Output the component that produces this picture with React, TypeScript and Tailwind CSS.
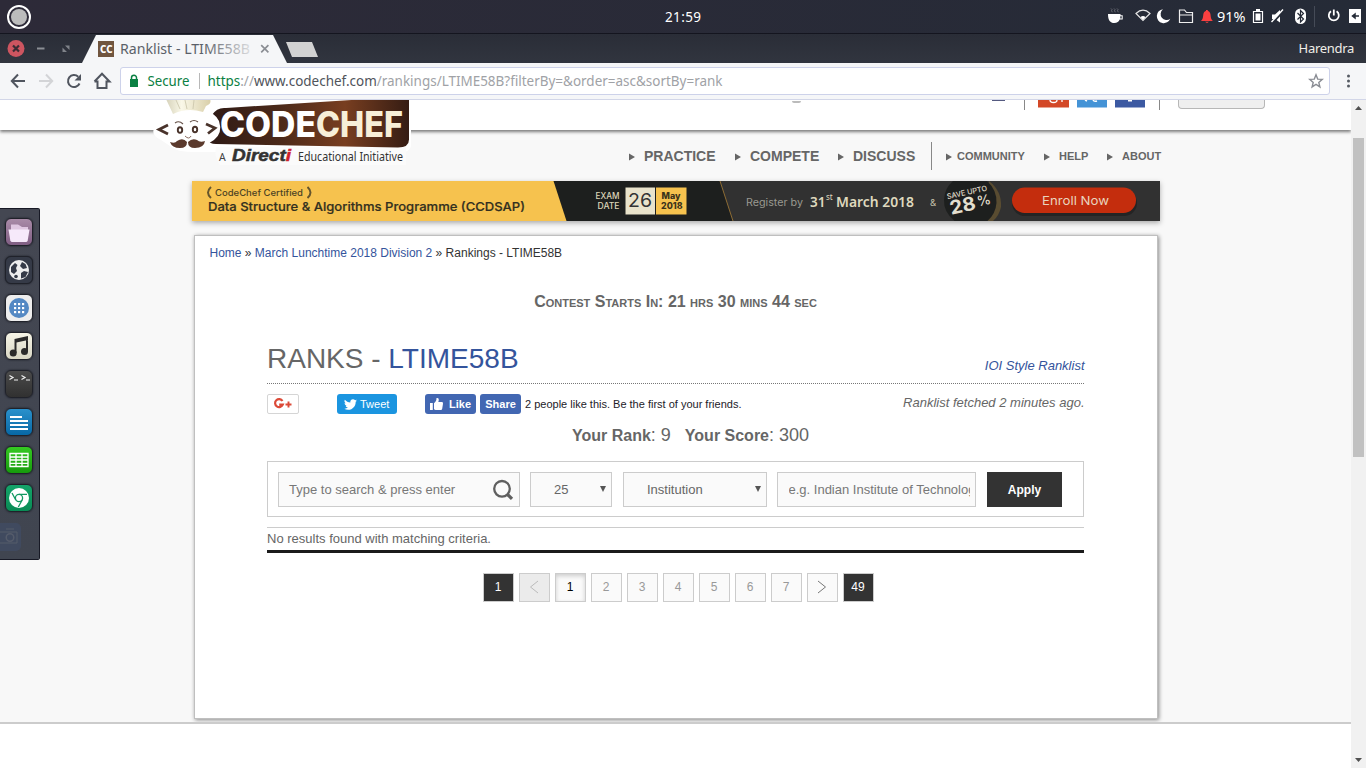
import React from "react";

const BODY = "font-['Liberation_Sans',Arial,sans-serif]";
const UI = "font-['Noto_Sans','Open_Sans',sans-serif]";

function TopBar() {
  return (
    <div className={`flex h-[34px] shrink-0 items-center border-b border-[#14151f] bg-linear-to-r from-[#2d2a38] to-[#252b37] text-white ${UI}`}>
      <div className="flex w-[610px] shrink-0 pl-[7px]">
        <div className="flex size-6 items-center justify-center rounded-full border-2 border-white">
          <div className="size-4 rounded-full bg-[#bcbcbc]" />
        </div>
      </div>
      <div className="w-[146px] shrink-0 text-center text-[13.5px] leading-[32px]">
        <svg width="60" height="20" className="mx-auto block">
          <text x="12" y="15" fontSize="13.5" fill="#fff" textLength="36">21:59</text>
        </svg>
      </div>
      <svg width="610" height="33" viewBox="756 0 610 33" className="block shrink-0" fill="none">
        <g fill="#fff">
          <path d="M1108 14h12.500v1.200h2.200v4.300h-3c-.8 2.200-2.600 3.500-5.400 3.500-4 0-6.300-2.500-6.300-9zM1120.300 16.200v2.200h1.400v-2.200z" fillRule="evenodd" />
          <path d="M1111 8.500l1 1-.5 1.200.8 1.500M1114 8.500l1 1-.5 1.200.8 1.500M1117 8.500l1 1-.5 1.200.8 1.500" stroke="#777a82" strokeWidth=".8" fill="none" />
        </g>
        <path d="M1136 13.500c4.500-4.200 9.500-4.200 14 0l-7 7z" stroke="#e6e6e6" strokeWidth="1.200" />
        <path d="M1140.500 17q2.500-2 5 0l-2.500 3z" fill="#fff" />
        <path d="M1163 9.200a7 7 0 1 0 7.300 9.600 6 6 0 0 1-7.300-9.600z" fill="#fff" />
        <path d="M1179.500 22.500v-12.500h5l2 2.500h6v10zM1179.500 15h13" stroke="#eee" strokeWidth="1.200" />
        <path d="M1201 21c2-2 2-4 2.300-6.500.3-2.200 1.500-3.300 2.700-3.500V10h1.800v1c1.200.2 2.400 1.300 2.700 3.500.3 2.500.3 4.500 2.300 6.500zM1205 21.800h4l-2 1.200z" fill="#fb4040" />
        <text x="1217" y="22" fontSize="14" fill="#fff" textLength="28.500" lengthAdjust="spacingAndGlyphs">91%</text>
        <path d="M1253.500 11.500h9v11h-9z" stroke="#fff" strokeWidth="1.200" />
        <path d="M1256 9h4v2h-4zM1255.500 13.500h5v7h-5z" fill="#fff" />
        <path d="M1272 14.500h3l5-4.500v12.500l-5-3.500h-3z" fill="#fff" />
        <path d="M1284 10.500l-12 13" stroke="#252b37" strokeWidth="2" />
        <path d="M1283 9.500l-11.500 12.500" stroke="#fff" strokeWidth="1.400" />
        <rect x="1295" y="8.500" width="11" height="15.500" rx="5.500" fill="#fff" />
        <path d="M1297.500 13l6 6-3 3V10.500l3 3-6 6" stroke="#252b37" strokeWidth="1.200" />
        <path d="M1314.500 6v21" stroke="#454b57" />
        <path d="M1331 11.300a5 5 0 1 0 5.600 0" stroke="#fff" strokeWidth="1.800" />
        <path d="M1333.800 9.500v6" stroke="#fff" strokeWidth="1.800" />
        <path d="M1349 9h12v14h-12z" fill="#fff" />
        <path d="M1359 16h-6M1355 14l-2.500 2 2.500 2z" stroke="#252b37" strokeWidth="1.500" fill="#252b37" />
      </svg>
    </div>
  );
}

function TabStrip() {
  return (
    <div className={`flex h-[29px] shrink-0 items-start bg-linear-to-b from-[#2a2d37] to-[#31353f] ${UI}`}>
      <svg width="82" height="29" className="block shrink-0" fill="none">
        <circle cx="16" cy="14.500" r="8.500" fill="#cd5560" />
        <path d="M13 11.500l6 6M19 11.500l-6 6" stroke="#3a2c34" strokeWidth="2.200" />
        <path d="M37 14.500h7.500" stroke="#8b8e94" strokeWidth="2" />
        <path d="M65 11.500h4.500v4.500zM62.500 13.500v4.500h4.500z" fill="#80838a" />
      </svg>
      <div className="mt-px flex h-7 w-[205px] shrink-0 items-center bg-[#f5f6f8] pl-4 [clip-path:polygon(0_100%,14px_0,191px_0,100%_100%)]">
        <div className="flex h-4 w-4 items-center justify-center bg-[#70553f]">
          <svg width="16" height="16"><text x="2" y="11.500" fontSize="10" fontWeight="800" fill="#fff" textLength="12.500" lengthAdjust="spacingAndGlyphs">CC</text></svg>
        </div>
        <svg width="131" height="22" className="ml-[6px] block shrink-0">
          <defs><linearGradient id="fade" gradientUnits="userSpaceOnUse" x1="85" x2="131" y1="0" y2="0"><stop offset="0" stopColor="#5a5f68" /><stop offset="1" stopColor="#5a5f68" stopOpacity=".15" /></linearGradient></defs>
          <text x="0" y="16" fontSize="15" fill="url(#fade)" textLength="130" lengthAdjust="spacingAndGlyphs">Ranklist - LTIME58B</text>
        </svg>
        <svg width="10" height="10" viewBox="0 0 10 10" className="ml-[9px] block shrink-0"><path d="M1.200 1.200l7.200 7.200M8.400 1.200L1.200 8.400" stroke="#8b8e94" strokeWidth="1.700" /></svg>
      </div>
      <div className="-ml-px mt-2 h-[15px] w-8 bg-[#d2d2d2] [clip-path:polygon(0_0,26px_0,100%_100%,6px_100%)]" />
      <div className="ml-auto pr-3 text-[13px] leading-[28px] tracking-[-0.3px] text-[#f0eee8]">Harendra</div>
    </div>
  );
}

function Toolbar() {
  return (
    <div className={`flex h-[37px] shrink-0 items-center border-b border-[#d2d6e8] bg-[#f5f6f8] ${UI}`}>
      <svg width="120" height="36" viewBox="0 63 120 36" className="block shrink-0" fill="none" strokeWidth="2">
        <path d="M25 81H12M18 74.500L11.800 81l6.200 6.500" stroke="#50555f" />
        <path d="M39 81h13M46 74.500l6.200 6.500-6.200 6.500" stroke="#d3d4d7" />
        <path d="M79.500 83.500a6 6 0 1 1-1.300-6.700" stroke="#50555f" />
        <path d="M81 74v6.500h-6.500z" fill="#50555f" />
        <path d="M97.500 80.500v7.500h9v-7.500M94.500 81.500l7.500-7.800 7.500 7.800h-3M94.500 81.500h3" stroke="#50555f" />
      </svg>
      <div className="flex h-7 w-[1210px] shrink-0 items-center rounded-[3px] border border-[#cdd2ea] bg-white">
        <svg width="26" height="26" viewBox="0 0 26 26" className="block shrink-0"><path d="M9 11h8v8H9z" fill="#0b8043" /><path d="M10.500 11.500V9.700a2.500 2.500 0 0 1 5 0v1.800" stroke="#0b8043" strokeWidth="1.500" fill="none" /></svg>
        <svg width="52" height="24" className="block shrink-0"><text x="0.500" y="17" fontSize="14.500" fill="#0b8043" textLength="42" lengthAdjust="spacingAndGlyphs">Secure</text></svg>
        <span className="h-4 w-px bg-[#b8b8b8]" />
        <svg width="620" height="24" className="block" fontSize="14.500">
          <text x="7.500" y="17" textLength="515" lengthAdjust="spacingAndGlyphs" fill="#a0a2a6"><tspan fill="#0b8043">https</tspan>://<tspan fill="#50545b">www.codechef.com</tspan>/rankings/LTIME58B?filterBy=&amp;order=asc&amp;sortBy=rank</text>
        </svg>
        <svg width="16" height="16" viewBox="0 0 16 16" className="ml-auto mr-[5px] block"><path d="M8 1.800l1.700 4.300 4.600.3-3.500 3 1.100 4.500L8 11.400l-3.900 2.500 1.100-4.500-3.500-3 4.600-.3z" fill="none" stroke="#8a8d94" strokeWidth="1.400" /></svg>
      </div>
      <svg width="36" height="36" fill="#555a63"><circle cx="18.500" cy="13" r="1.500" /><circle cx="18.500" cy="18" r="1.500" /><circle cx="18.500" cy="23" r="1.500" /></svg>
    </div>
  );
}

function SiteHeader() {
  return (
    <div className="relative z-10 flex h-[30px] shrink-0 items-start bg-white shadow-[0_2px_3px_#7c7c7c]">
      <div className="ml-[792px] mt-px h-[2px] w-[9px] rounded-b bg-[#bbb]" />
      <div className="ml-[191px] h-px w-[13px] bg-[#555a80]" />
      <div className="ml-[19px] h-[10px] w-px bg-[#888]" />
      <svg width="110" height="11" className="ml-[13px] block">
        <path d="M0 0h31v7.500H0z" fill="#d34827" /><path d="M12 0q0 2.500 3.500 2.500Q19 2.500 19 0M24 0v2" stroke="#fff" strokeWidth="1.300" fill="none" />
        <path d="M39 0h30v7.500H39z" fill="#4493d6" /><path d="M47 0l2 1M55 0q1 2 4 1" stroke="#fff" strokeWidth="1.500" fill="none" />
        <path d="M77 0h30v7.500H77z" fill="#3c59a2" /><path d="M90 0h4v1.500h-4z" fill="#fff" />
      </svg>
      <div className="ml-[11px] h-[10px] w-px bg-[#888]" />
      <div className="ml-[18px] h-[9px] w-[87px] rounded-b-[4px] border border-t-0 border-[#b7b7b7] bg-[#efefef]" />
    </div>
  );
}

function Logo() {
  return (
    <svg width="268" height="66" viewBox="148 100 268 66" className="absolute left-[148px] top-0 z-20 block" fontFamily="Inter, sans-serif">
      <defs>
        <linearGradient id="choc" x1="0" x2="1"><stop offset="0" stopColor="#2e1a15" /><stop offset=".35" stopColor="#4b2919" /><stop offset=".68" stopColor="#783e20" /><stop offset="1" stopColor="#351c13" /></linearGradient>
        <linearGradient id="hat" x1="0" x2="1"><stop offset="0" stopColor="#d6d2ba" /><stop offset=".35" stopColor="#faf8e8" /><stop offset="1" stopColor="#d9cfa9" /></linearGradient>
      </defs>
      <path d="M163 99h248v46q0 5-6 7H216q-8 0-22 0-16 0-21-4l-12-8q-10-5-7-11l15-14z" fill="#fff" />
      <path d="M216 147h190v18H220q-6-8-4-18z" fill="#fbfbfb" />
      <path d="M226 108q-9-1-14 7l2 8q2 5-5 17 0 4 7 4l182 3.500q11 0 11-8v-41H375z" fill="url(#choc)" />
      <path d="M203 113q10-3 16 8 4 12-5 19-5 4-9 2z" fill="#fff" />
      <path d="M166 99l7 15q14-7 30-2l3-6q6-2 4-7z" fill="url(#hat)" />
      <path d="M185 100l2 9M194 100l-1 9M176 100l4 9" stroke="#c9c4aa" strokeWidth=".8" />
      <path d="M168 125l-9 4.500 9 4.500M206 124l9 4-7 5.500" fill="none" stroke="#49332b" strokeWidth="2.800" />
      <path d="M175 123q4-3 8 1M190 122q4-3 8 0" fill="none" stroke="#655047" strokeWidth="1.100" />
      <ellipse cx="180" cy="130" rx="2.200" ry="2.800" fill="none" stroke="#49332b" strokeWidth="1.900" />
      <ellipse cx="195" cy="129.500" rx="2.200" ry="2.800" fill="none" stroke="#49332b" strokeWidth="1.900" />
      <path d="M185 136q4 4 6 0" fill="none" stroke="#8b6d60" strokeWidth="1" />
      <path d="M170 142q5 2 7-1 6-4 10 1 0 6-7 6-8 0-10-6zM205 141q-5 2-8-1-5-2-9 2 0 6 7 6 9 0 10-7z" fill="#5b3a2d" />
      <text x="220" y="137" fontSize="35" fontWeight="800" fill="#fff" textLength="96" lengthAdjust="spacingAndGlyphs">CODE</text>
      <text x="316" y="137" fontSize="35" fontWeight="800" fill="#f7efd8" textLength="87" lengthAdjust="spacingAndGlyphs">CHEF</text>
      <g fontFamily="Noto Sans, sans-serif">
        <text x="219" y="161" fontSize="10.500" fill="#444">A</text>
        <text x="232" y="161" fontFamily="Liberation Sans, sans-serif" fontSize="16" fontWeight="700" fontStyle="italic" fill="#333" stroke="#333" strokeWidth=".5" textLength="59" lengthAdjust="spacingAndGlyphs">Direct<tspan fill="#cf202b" stroke="#cf202b">i</tspan></text>
        <text x="298" y="161" fontSize="12" fill="#333" textLength="105" lengthAdjust="spacingAndGlyphs">Educational Initiative</text>
      </g>
    </svg>
  );
}

function NavItem({ label, cls, textCls }: { label: string; cls: string; textCls: string }) {
  return (
    <div className={`flex shrink-0 items-center ${cls}`}>
      <svg width="6" height="8" className="block shrink-0"><path d="M0 .5l6 3.500-6 3.500z" fill="#666" /></svg>
      <span className={`font-bold text-[#666] ${textCls}`}>{label}</span>
    </div>
  );
}

function Nav() {
  return (
    <div className="flex h-[51px] shrink-0 items-center pl-[629px]">
      <NavItem label="PRACTICE" cls="mt-[2px] w-[106px]" textCls="ml-[9px] text-[14px]" />
      <NavItem label="COMPETE" cls="mt-[2px] w-[103px]" textCls="ml-[9px] text-[14px]" />
      <NavItem label="DISCUSS" cls="mt-[2px] w-[93px]" textCls="ml-[9px] text-[14px]" />
      <div className="h-7 w-px bg-[#888]" />
      <NavItem label="COMMUNITY" cls="ml-[14px] mt-[2px] w-[98px]" textCls="ml-[5px] text-[11px]" />
      <NavItem label="HELP" cls="mt-[2px] w-[63px]" textCls="ml-[9px] text-[11px]" />
      <NavItem label="ABOUT" cls="mt-[2px]" textCls="ml-[9px] text-[11px]" />
    </div>
  );
}

function Banner() {
  return (
    <svg width="968" height="40" viewBox="192 181 968 40" className="ml-[192px] block shrink-0 shadow-[0_2px_5px_#aaa]" fontFamily="Inter, sans-serif">
      <path d="M192 181h968v40H192z" fill="#1d1f1e" />
      <path d="M192 181h361.500l13 40H192z" fill="#f6c24e" />
      <path d="M720 181h440v40H733z" fill="#313131" />
      <path d="M720 181l13 40" stroke="#8d6c35" />
      <text x="215" y="196" fontSize="9" fontWeight="500" fill="#4c4324" textLength="88" lengthAdjust="spacingAndGlyphs">CodeChef Certified</text>
      <path d="M211 187q-6 5.500 0 11M307.500 187q6 5.500 0 11" fill="none" stroke="#65552c" strokeWidth="2" />
      <text x="208" y="210.500" fontSize="12" fontWeight="500" fill="#33301f" stroke="#33301f" strokeWidth=".2" textLength="317" lengthAdjust="spacingAndGlyphs">Data Structure &amp; Algorithms Programme (CCDSAP)</text>
      <g fontSize="8.500" fontWeight="500" fill="#ddd6ba"><text x="595.500" y="198.500" textLength="24" lengthAdjust="spacingAndGlyphs">EXAM</text><text x="597.500" y="209" textLength="22" lengthAdjust="spacingAndGlyphs">DATE</text></g>
      <path d="M625.500 187.500H655v27h-29.500z" fill="#e9e3cb" /><path d="M656 187.500h30.500v27H656z" fill="#f6c24e" />
      <text x="628" y="206.500" fontSize="19" fill="#333" textLength="24" lengthAdjust="spacingAndGlyphs">26</text>
      <g fontSize="9" fontWeight="800" fill="#3b321a"><text x="661.500" y="199" textLength="19" lengthAdjust="spacingAndGlyphs">May</text><text x="661" y="209" textLength="21.500" lengthAdjust="spacingAndGlyphs">2018</text></g>
      <text x="746" y="206" fontSize="10" fill="#999990" textLength="57" lengthAdjust="spacingAndGlyphs">Register by</text>
      <g fontFamily="Noto Sans, sans-serif" fill="#dfd9be">
        <text x="810" y="207" fontSize="14.500" fontWeight="600" textLength="15.500" lengthAdjust="spacingAndGlyphs">31</text>
        <text x="826" y="199.500" fontSize="8">st</text>
        <text x="836" y="207" fontSize="14.500" fontWeight="600" textLength="78" lengthAdjust="spacingAndGlyphs">March 2018</text>
      </g>
      <text x="930" y="206" fontSize="9.500" fill="#c6c1aa">&amp;</text>
      <path d="M989 181q13 10 12 26-2 9-8 14h-10z" fill="#594c31" />
      <path d="M953 181h34q10 9 9.500 22-1 11-9 18h-33q-11-9-10.500-21 .5-12 9-19z" fill="#1d1f1e" />
      <g transform="rotate(-12 970 202)" fill="#e2dfcf">
        <text x="948.500" y="194.500" fontSize="7.500" fontWeight="500" textLength="41" lengthAdjust="spacingAndGlyphs">SAVE UPTO</text>
        <text x="949" y="210.500" fontSize="19" fontWeight="700" textLength="26" lengthAdjust="spacingAndGlyphs">28</text>
        <text x="977" y="208" fontSize="14" fontWeight="500" textLength="14" lengthAdjust="spacingAndGlyphs">%</text>
      </g>
      <rect x="1012" y="190" width="125" height="26" rx="13" fill="#242424" />
      <rect x="1012" y="187.500" width="124" height="25.500" rx="12.700" fill="#c42d0d" />
      <text x="1042" y="204.500" fontSize="12" fill="#e9d4bd" textLength="67" lengthAdjust="spacingAndGlyphs">Enroll Now</text>
    </svg>
  );
}

function Social() {
  return (
    <div className="flex h-5 items-center text-[11px] leading-none">
      <div className="flex h-5 w-8 items-center justify-center rounded-[2px] border border-[#d5d5d5] bg-white">
        <svg width="20" height="14" fill="none" stroke="#dc4a38"><path d="M9.500 4A4 4 0 1 0 9.800 7.600H6.200" strokeWidth="2.200" /><path d="M12.500 7.500h6M15.500 4.500v6" strokeWidth="1.900" /></svg>
      </div>
      <div className="ml-[38px] flex h-5 w-[60px] items-center rounded-[3px] bg-[#1b95e0] pl-[7px] text-white">
        <svg width="13" height="13" viewBox="0 0 24 24"><path fill="#fff" d="M23.950 4.570a10 10 0 0 1-2.820.77 4.960 4.960 0 0 0 2.160-2.720c-.95.550-2 .960-3.130 1.180a4.920 4.920 0 0 0-8.380 4.480C7.690 8.100 4.070 6.130 1.640 3.160a4.920 4.920 0 0 0 1.520 6.570 4.900 4.900 0 0 1-2.230-.61v.06a4.920 4.920 0 0 0 3.950 4.830 5 5 0 0 1-2.210.08 4.940 4.940 0 0 0 4.600 3.420A9.870 9.870 0 0 1 0 19.540a13.990 13.990 0 0 0 7.550 2.210c9.050 0 14-7.500 14-13.980 0-.21 0-.42-.02-.63a9.940 9.940 0 0 0 2.420-2.570z" /></svg>
        <span className="ml-[3px]">Tweet</span>
      </div>
      <div className="ml-7 flex h-5 w-[51px] items-center rounded-[3px] bg-[#4267b2] pl-[5px] font-bold text-white">
        <svg width="14" height="14" viewBox="0 0 14 14" fill="#fff"><path d="M0 6h2.800v7H0zM4 6.200C6 4.500 6.500 3 6.500 1q2.500-.6 2.300 2L8.300 5H12q1.300.3 1 1.800l-.8 5Q12 13 10.800 13H5.500L4 12.300z" /></svg>
        <span className="ml-[5px]">Like</span>
      </div>
      <div className="ml-1 flex h-5 w-[41px] items-center justify-center rounded-[3px] bg-[#4267b2] font-bold text-white">Share</div>
      <span className="ml-1 text-[#1d2129]">2 people like this. Be the first of your friends.</span>
    </div>
  );
}

function SelectArrow() {
  return <svg width="6" height="6" className="mb-[2px] block"><path d="M0 0h6L3 6z" fill="#555" /></svg>;
}

function Filters() {
  const field = "flex h-[35px] shrink-0 items-center border border-[#ccc] bg-[#fafafa] text-[13px]";
  return (
    <div className="flex h-14 w-[817px] items-start border border-[#ccc] pl-[10px] pt-[10px]">
      <div className={`${field} w-[242px] justify-between pl-[10px] pr-[5px] text-[#777]`}>
        <span>Type to search &amp; press enter</span>
        <svg width="22" height="22" fill="none" stroke="#5f5f5f"><circle cx="10" cy="9.800" r="7.800" strokeWidth="2.300" /><path d="M15.500 15.500l4.500 4.300" strokeWidth="3.200" /></svg>
      </div>
      <div className={`${field} ml-[10px] w-[82px] justify-between pl-[23px] pr-[5px] text-[#666]`}><span>25</span><SelectArrow /></div>
      <div className={`${field} ml-[11px] w-[144px] justify-between pl-[23px] pr-[5px] text-[#666]`}><span>Institution</span><SelectArrow /></div>
      <div className={`${field} ml-[10px] w-[199px] pl-[10.5px] pr-[5px] text-[#777]`}><span className="overflow-hidden whitespace-nowrap">e.g. Indian Institute of Technology</span></div>
      <div className="ml-[11px] h-[35px] w-[75px] bg-[#333] text-center text-[12px] font-bold leading-[36px] text-white">Apply</div>
    </div>
  );
}

function Pagination() {
  const base = "flex h-[29px] w-[31px] items-center justify-center border border-[#ccc] pb-[2px] pr-px text-[12px]";
  return (
    <div className="ml-[216px] flex gap-[5px]">
      <div className={`${base} bg-[#333] text-white`}>1</div>
      <div className={`${base} bg-[#ebebeb]`}><svg width="10" height="14" fill="none" stroke="#bbb"><path d="M9 1L1.500 7 9 13" /></svg></div>
      <div className={`${base} bg-[#fafafa] text-black shadow-[inset_0_2px_4px_#ccc]`}>1</div>
      {[2, 3, 4, 5, 6, 7].map((n) => <div key={n} className={`${base} bg-[#fafafa] text-[#999]`}>{n}</div>)}
      <div className={`${base} bg-[#fafafa]`}><svg width="10" height="14" fill="none" stroke="#777"><path d="M1 1l7.500 6L1 13" /></svg></div>
      <div className={`${base} bg-[#333] text-white`}>49</div>
    </div>
  );
}

function RankCard() {
  return (
    <div className="ml-[194px] mt-[14px] flex h-[484px] w-[964px] shrink-0 flex-col border border-[#bfbfbf] bg-white pl-[72px] text-[#666] shadow-[1px_1px_4px_#888]">
      <div className="-ml-[57.5px] mt-[9px] h-4 whitespace-nowrap text-[12px] leading-4 text-[#333]"><span className="text-[#34549c]">Home</span> » <span className="text-[#34549c]">March Lunchtime 2018 Division 2</span> » Rankings - LTIME58B</div>
      <div className="mt-[30px] h-[22px] w-[817px] text-center text-[16px] font-bold leading-[22px] [font-variant:small-caps]">Contest Starts In: 21 hrs 30 mins 44 sec</div>
      <div className="mt-[20px] flex h-[51px] w-[817px] justify-between border-b border-dotted border-[#777]">
        <h1 className="mt-[10px] text-[28px] leading-8">RANKS - <span className="text-[#34549c]">LTIME58B</span></h1>
        <span className="-mr-[0.5px] mt-[25px] text-[13px] italic leading-4 text-[#34549c]">IOI Style Ranklist</span>
      </div>
      <div className="mt-[10px] flex h-5 w-[817px] justify-between">
        <Social />
        <span className="-mr-[0.5px] text-[13px] italic leading-[18px]">Ranklist fetched 2 minutes ago.</span>
      </div>
      <div className="mt-[10px] h-[22px] whitespace-pre pl-[305px] text-[18px] leading-[22px]"><b className="text-[16px]">Your Rank</b>: 9<b className="ml-[14px] text-[16px]">Your Score</b>: 300</div>
      <div className="mt-[15px]"><Filters /></div>
      <div className="mb-5 mt-[10px] h-[26px] w-[817px] border-b-[3px] border-t border-b-[#1b1b1b] border-t-[#ccc] text-[13px] leading-[22px]">No results found with matching criteria.</div>
      <Pagination />
    </div>
  );
}

function Scrollbar() {
  return (
    <div className="flex w-[15px] shrink-0 flex-col items-center bg-[#f1f1f1]">
      <svg width="15" height="38"><path d="M4 10l3.500-4 3.500 4z" fill="#505050" /></svg>
      <div className="h-[319px] w-[11px] bg-[#c1c1c1]" />
      <svg width="15" height="15" className="mt-auto"><path d="M4 5l3.500 4L11 5z" fill="#505050" /></svg>
    </div>
  );
}

function Dock() {
  const tile = "flex size-7 shrink-0 items-center justify-center rounded-[6px] border border-[#20222a] shadow-[0_0_2px_#151720]";
  return (
    <div className="absolute left-0 top-[208px] z-30 flex h-[352px] w-10 flex-col gap-[10px] overflow-hidden rounded-r-[2px] border border-l-0 border-[#171925] bg-linear-to-b from-[#444752] to-[#404550] pl-[5px] pt-[9px]">
      <div className={`${tile} bg-linear-to-b from-[#a98ba8] to-[#805e83]`}><svg width="24" height="24" className="shrink-0"><path d="M4 8V4.500h7l4 2.500h6v4H4z" fill="#e0c7e2" /><path d="M1.500 9.500h21l-1.800 11q-.3 1.500-2 1.500H5.300q-1.500 0-2-1.500z" fill="#f6e9fa" /></svg></div>
      <div className={`${tile} bg-[#353a47]`}><svg width="24" height="24" className="shrink-0"><circle cx="12" cy="12" r="10" fill="#eee" /><path d="M4 9l4-4 2.500 2-1.500 3 1 3-3 3-3-2zM15 4l3.500 2L20 10l-4 1-3-3zM14 15l3-2 4 1-2.500 5-4.500 1.500z" fill="#353a47" /><circle cx="9" cy="18.500" r="1.800" fill="#353a47" /></svg></div>
      <div className={`${tile} bg-[#ededed]`}><svg width="24" height="24" className="shrink-0"><circle cx="12" cy="12" r="10" fill="#5388c3" />{[7, 11, 15].map((y) => [7, 11, 15].map((x) => <rect key={`${x}-${y}`} x={x} y={y} width="2.200" height="2.200" fill="#fff" />))}</svg></div>
      <div className={`${tile} bg-linear-to-b from-[#f5f4e6] to-[#d9d7c5]`}><svg width="24" height="24" fill="#2b2b2b" className="shrink-0"><path d="M7.500 5L21 2v4L9.500 8.500V19h-2zM19 4h2v13.500h-2z" /><circle cx="6.200" cy="19" r="3.500" /><circle cx="17.500" cy="17.500" r="3.500" /></svg></div>
      <div className={`${tile} bg-linear-to-b from-[#4b4b4b] to-[#313131]`}><svg width="24" height="24" fill="none" stroke="#f0f0f0" strokeWidth="1.200" className="shrink-0"><path d="M2.500 3.500L6 5.500l-3.500 2M7 8h4M14.500 3.500L18 5.500l-3.500 2M19 8h4" /></svg></div>
      <div className={`${tile} bg-linear-to-b from-[#2a91cc] to-[#0668a5]`}><svg width="20" height="20" stroke="#fff" strokeWidth="2" className="shrink-0"><path d="M1 5h12M1 9h18M1 13h18M1 17h18" /></svg></div>
      <div className={`${tile} bg-linear-to-b from-[#35ca22] to-[#169b0c]`}><svg width="20" height="18" fill="none" stroke="#fff" strokeWidth="1.300" className="shrink-0"><path d="M1 2.500h18v13H1zM1 6h18M1 9h18M1 12.300h18M7 2.500v13M13 2.500v13" /></svg></div>
      <div className={`${tile} bg-linear-to-b from-[#14a46a] to-[#098b55]`}><svg width="24" height="24" fill="none" stroke="#129861" strokeWidth="1.300" className="shrink-0"><circle cx="12" cy="12" r="10" fill="#fff" stroke="none" /><circle cx="12" cy="12" r="3.600" /><path d="M12 8.400h8M8.800 14L5 7M15.200 14l-3.900 7" /></svg></div>
      <div className="-ml-[5px] mt-px flex h-7 w-[21px] shrink-0 items-center justify-end rounded-r-[5px] bg-[#404a5f]"><svg width="21" height="20" fill="none" stroke="#555c6b"><path d="M0 5h17v11H0M6 2h8" /><circle cx="10" cy="10.500" r="3.800" strokeWidth="1.500" /></svg></div>
    </div>
  );
}

export default function App() {
  return (
    <div className="relative flex h-[768px] w-[1366px] flex-col overflow-hidden bg-white">
      <TopBar />
      <TabStrip />
      <Toolbar />
      <div className={`flex h-[668px] ${BODY}`}>
        <div className="relative flex w-[1351px] shrink-0 flex-col overflow-hidden bg-white">
          <SiteHeader />
          <Logo />
          <div className="flex h-[594px] shrink-0 flex-col overflow-hidden border-b-2 border-[#ccc] bg-[#f8f8f8]">
            <Nav />
            <Banner />
            <RankCard />
          </div>
        </div>
        <Scrollbar />
      </div>
      <Dock />
    </div>
  );
}
